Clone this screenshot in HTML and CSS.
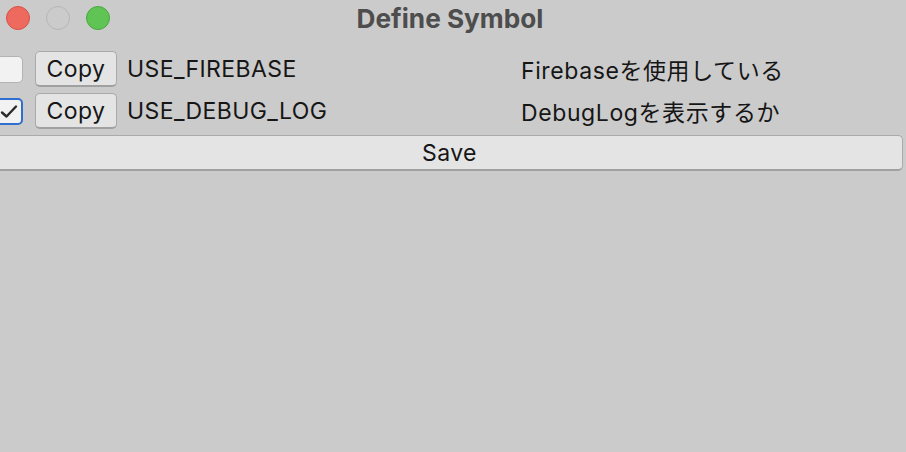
FILE: index.html
```html
<!DOCTYPE html>
<html lang="ja">
<head>
<meta charset="utf-8">
<title>Define Symbol</title>
<link rel="stylesheet" href="styles.css">
</head>
<body>
<div class="window">
  <header class="titlebar">
    <div class="lights">
      <span class="light red"></span>
      <span class="light gray"></span>
      <span class="light green"></span>
    </div>
    <div class="title">Define Symbol</div>
    <div></div>
  </header>
  <main class="content">
    <div class="row">
      <span class="check"></span>
      <button class="btn copy">Copy</button>
      <span class="name">USE_FIREBASE</span>
      <span class="desc">Firebaseを使用している</span>
    </div>
    <div class="row">
      <span class="check checked">
        <svg viewBox="0 0 27 27" width="27" height="27"><path d="M6 14.5 L10.5 18.5 L20 8.5" fill="none" stroke="#2b2b2b" stroke-width="2.4" stroke-linecap="round" stroke-linejoin="round"/></svg>
      </span>
      <button class="btn copy">Copy</button>
      <span class="name">USE_DEBUG_LOG</span>
      <span class="desc">DebugLogを表示するか</span>
    </div>
    <button class="btn save">Save</button>
  </main>
</div>
</body>
</html>
```
FILE: styles.css
```css
html, body {
  margin: 0;
  padding: 0;
  background: #cbcbcb;
}
body {
  width: 906px;
  height: 452px;
  overflow: hidden;
  font-family: Inter, "Noto Sans CJK JP", sans-serif;
  color: #161616;
}
.titlebar {
  height: 36px;
  display: grid;
  grid-template-columns: 1fr auto 1fr;
  align-items: center;
}
.lights {
  display: flex;
  gap: 16px;
  padding-left: 6px;
}
.light {
  width: 24px;
  height: 24px;
  border-radius: 50%;
  box-sizing: border-box;
}
.red { background: #ee6a5e; border: 1px solid #d65247; }
.gray { border: 1.5px solid #b6b6b6; }
.green { background: #5fc454; border: 1px solid #4aa83f; }
.title {
  font-weight: 700;
  font-size: 26.2px;
  color: #4d4d4d;
  margin-right: 6px;
}
.content {
  padding-top: 15px;
  display: flex;
  flex-direction: column;
  gap: 6px;
}
.row {
  display: flex;
  align-items: center;
  height: 36px;
}
.check {
  width: 27px;
  height: 27px;
  margin-left: -4px;
  box-sizing: border-box;
  border: 1.5px solid #b3b3b3;
  border-radius: 5px;
  background: #f2f2f2;
  display: block;
}
.check svg { display: block; margin: -1.5px; }
.check.checked { border: 2px solid #2f6fd0; }
.check.checked svg { margin: -2px; }
.btn {
  font-family: Inter, "Noto Sans CJK JP", sans-serif;
  font-size: 23px;
  letter-spacing: 0.4px;
  color: #161616;
  background: #e4e4e4;
  border: 1.5px solid #aaaaaa;
  border-bottom-width: 2px;
  border-bottom-color: #a0a0a0;
  border-radius: 5px;
  padding: 0;
  box-sizing: border-box;
}
.copy {
  width: 82px;
  height: 36px;
  margin-left: 12px;
}
.name {
  font-size: 23px;
  letter-spacing: 0.4px;
  margin-left: 10px;
  width: 394px;
}
.desc {
  font-size: 23px;
  letter-spacing: 0.6px;
}
.save {
  margin-left: -4px;
  margin-right: 3px;
  height: 36px;
  width: calc(100% + 1px);
}
```
